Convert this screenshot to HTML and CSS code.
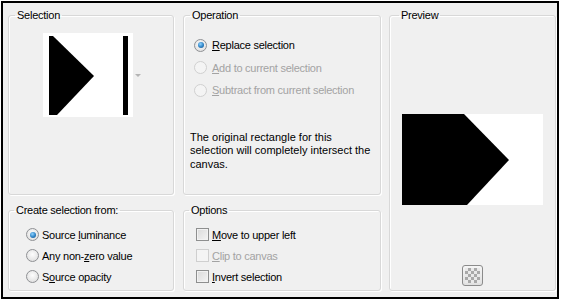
FILE: index.html
```html
<!DOCTYPE html>
<html lang="en">
<head>
    <meta charset="UTF-8">
    <title>Selection from mask</title>
    <link rel="stylesheet" href="styles.css">
</head>
<body>
    <div class="frame">
        <fieldset class="group group-selection">
            <legend>Selection</legend>
            <div class="thumb-row">
                <svg class="thumb" width="90" height="84" viewBox="0 0 90 84">
                    <rect width="90" height="84" fill="#fff"/>
                    <polygon points="6,3 10,3 51,43 14,82 6,82" fill="#000"/>
                    <rect x="80" y="3" width="5" height="79" fill="#000"/>
                </svg>
                <span class="drop-arrow"></span>
            </div>
        </fieldset>

        <fieldset class="group group-operation">
            <legend>Operation</legend>
            <div class="choices">
                <div class="choice">
                    <span class="radio checked"></span>
                    <span><u>R</u>eplace selection</span>
                </div>
                <div class="choice disabled">
                    <span class="radio"></span>
                    <span><u>A</u>dd to current selection</span>
                </div>
                <div class="choice disabled">
                    <span class="radio"></span>
                    <span><u>S</u>ubtract from current selection</span>
                </div>
            </div>
            <p class="note">The original rectangle for this selection will completely intersect the canvas.</p>
        </fieldset>

        <fieldset class="group group-preview">
            <legend>Preview</legend>
            <svg class="preview" width="141" height="91" viewBox="0 0 141 91">
                <rect width="141" height="91" fill="#fff"/>
                <polygon points="0,0 62,0 107,46 65,91 0,91" fill="#000"/>
            </svg>
            <button class="checker-btn"><span class="checker"></span></button>
        </fieldset>

        <fieldset class="group group-source">
            <legend>Create selection from:</legend>
            <div class="choices tight">
                <div class="choice">
                    <span class="radio checked"></span>
                    <span>Source <u>l</u>uminance</span>
                </div>
                <div class="choice">
                    <span class="radio"></span>
                    <span>Any non-<u>z</u>ero value</span>
                </div>
                <div class="choice">
                    <span class="radio"></span>
                    <span>S<u>o</u>urce opacity</span>
                </div>
            </div>
        </fieldset>

        <fieldset class="group group-options">
            <legend>Options</legend>
            <div class="choices tight">
                <div class="choice">
                    <span class="check"></span>
                    <span><u>M</u>ove to upper left</span>
                </div>
                <div class="choice disabled">
                    <span class="check"></span>
                    <span><u>C</u>lip to canvas</span>
                </div>
                <div class="choice">
                    <span class="check"></span>
                    <span><u>I</u>nvert selection</span>
                </div>
            </div>
        </fieldset>
    </div>
</body>
</html>
```

FILE: styles.css
```css
* {
    box-sizing: border-box;
}

body {
    margin: 0;
    background: #fff;
    font-family: "Liberation Sans", Arial, sans-serif;
    font-size: 11px;
    letter-spacing: -0.25px;
    color: #000;
}

.frame {
    margin: 1px;
    width: 558px;
    height: 298px;
    border: 2px solid #000;
    background: #f0f0f0;
    padding: 6px 2px 6px 5px;
    display: grid;
    grid-template-columns: 166px 198px 166px;
    grid-template-rows: 186px 87px;
    column-gap: 9px;
    row-gap: 9px;
}

.group {
    margin: 0;
    padding: 0;
    min-width: 0;
    border: 1px solid #d8d8d8;
    border-radius: 3px;
    box-shadow: inset 1px 1px 0 #fff, 1px 1px 0 #fff;
}

.group-preview {
    grid-column: 3;
    grid-row: 1 / span 2;
    margin-left: -1px;
}

.group legend {
    margin-left: 6px;
    padding: 0 2px;
    line-height: 13px;
}

.group-source legend,
.group-options legend {
    margin-left: 5px;
}

.group-preview legend {
    margin-left: 9px;
}

/* Selection thumbnail */
.thumb-row {
    display: flex;
    align-items: center;
    margin: 11px 0 0 34px;
}

.thumb {
    display: block;
}

.drop-arrow {
    width: 0;
    height: 0;
    margin-left: 2px;
    border-left: 3px solid transparent;
    border-right: 3px solid transparent;
    border-top: 3px solid #b4b4b4;
}

/* Radio / check rows */
.choices {
    margin: 12px 0 0 10px;
}

.choice {
    display: flex;
    align-items: center;
    gap: 5px;
    height: 22.5px;
}

.choices.tight {
    margin-top: 7px;
}

.choices.tight .choice {
    height: 21px;
}

.group-source .choices {
    margin-left: 17px;
}

.group-source .choice {
    gap: 3px;
}

.group-options .choices {
    margin-left: 12px;
}

.group-options .choice {
    gap: 3px;
}

.choice.disabled {
    color: #a3a3a3;
}

.radio {
    width: 13px;
    height: 13px;
    border-radius: 50%;
    border: 1px solid #8f9194;
    background: radial-gradient(circle at 50% 40%, #fdfdfd 0, #e4e4e4 70%, #d2d2d2 100%);
    position: relative;
    flex: none;
}

.radio.checked::after {
    content: "";
    position: absolute;
    left: 2.5px;
    top: 2.5px;
    width: 6px;
    height: 6px;
    border-radius: 50%;
    background: radial-gradient(circle at 40% 35%, #8fd3ff 0, #2d82c5 55%, #1a4f80 100%);
}

.choice.disabled .radio {
    border-color: #d0d0d0;
    background: #f4f4f4;
}

.check {
    width: 13px;
    height: 13px;
    border: 1px solid #8e8f8f;
    background: linear-gradient(135deg, #dadada 0, #f4f4f4 100%);
    box-shadow: inset 0 0 0 1px #f2f2f2;
    flex: none;
}

.choice.disabled .check {
    border-color: #cfcfcf;
    background: #f4f4f4;
    box-shadow: none;
}

.note {
    margin: 29px 0 0 6px;
    line-height: 13.5px;
    letter-spacing: 0;
    width: 186px;
}

/* Preview */
.group-preview {
    display: flex;
    flex-direction: column;
    align-items: center;
}

.preview {
    display: block;
    margin-top: 92px;
}

.checker-btn {
    margin-top: auto;
    margin-bottom: 4px;
    width: 21px;
    height: 21px;
    padding: 2px;
    border: 1px solid #8b8b8b;
    border-radius: 3px;
    background: linear-gradient(#f6f6f6, #e0e0e0);
    display: flex;
    align-items: center;
    justify-content: center;
}

.checker {
    width: 15px;
    height: 15px;
    background: repeating-conic-gradient(#a9a9a9 0 25%, #e9e9e9 0 50%) 0 0 / 6px 6px;
}
```
